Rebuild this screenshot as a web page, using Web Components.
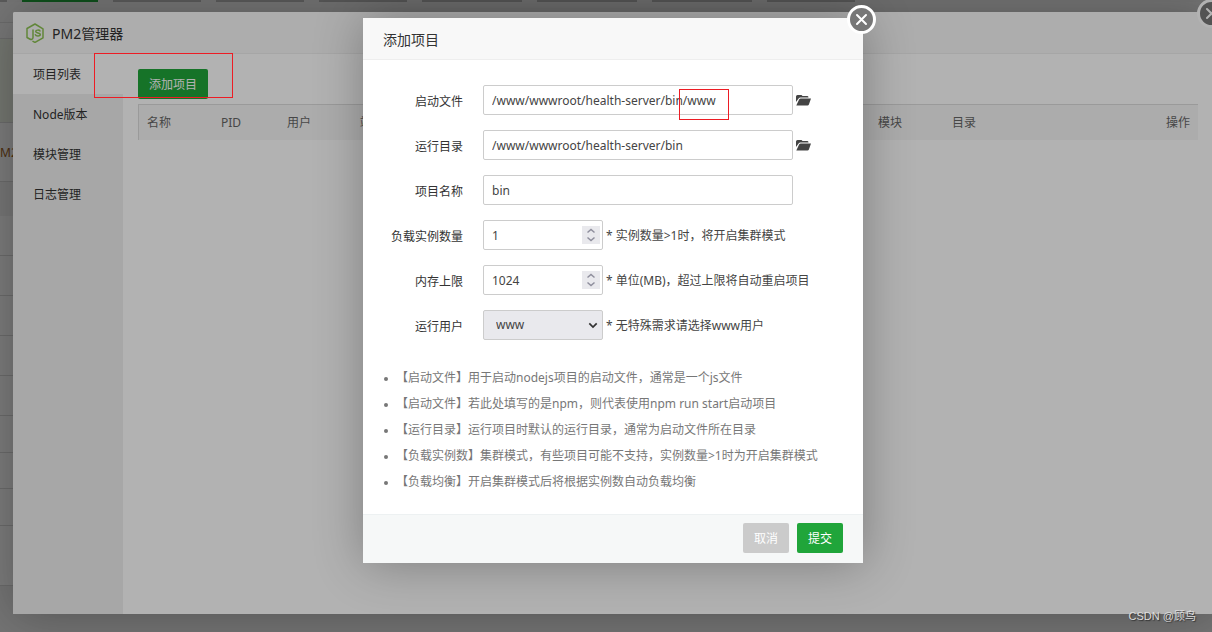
<!DOCTYPE html>
<html lang="zh-CN">
<head>
<meta charset="utf-8">
<title>PM2管理器</title>
<style>
html,body{margin:0;height:100%;overflow:hidden}
body{font:12px/20px "Noto Sans","Noto Sans CJK SC",sans-serif;color:#333;background:#eee}
</style>
</head>
<body>
<layer-stage>
  <panel-backdrop></panel-backdrop>
  <page-mask></page-mask>
  <manager-window heading="PM2管理器">
    <side-tabs slot="side"></side-tabs>
    <project-list></project-list>
  </manager-window>
  <page-mask></page-mask>
  <modal-dialog heading="添加项目">
    <form-row label="启动文件" value="/www/wwwroot/health-server/bin/www" kind="path"></form-row>
    <form-row label="运行目录" value="/www/wwwroot/health-server/bin" kind="path"></form-row>
    <form-row label="项目名称" value="bin" kind="text"></form-row>
    <form-row label="负载实例数量" value="1" kind="number">* 实例数量&gt;1时，将开启集群模式</form-row>
    <form-row label="内存上限" value="1024" kind="number">* 单位(MB)，超过上限将自动重启项目</form-row>
    <form-row label="运行用户" value="www" kind="select">* 无特殊需求请选择www用户</form-row>
    <help-list></help-list>
  </modal-dialog>
  <red-marks></red-marks>
  <water-mark>CSDN @顾鸟</water-mark>
</layer-stage>

<script>
const define = (name, html, setup) => customElements.define(name, class extends HTMLElement {
  constructor() {
    super();
    this.attachShadow({ mode: 'open' });
  }
  connectedCallback() {
    if (this.shadowRoot.childNodes.length) return;
    const t = document.createElement('template');
    t.innerHTML = typeof html === 'function' ? html(this) : html;
    this.shadowRoot.append(t.content.cloneNode(true));
    if (setup) setup(this);
  }
});

define('layer-stage', `
<style>
:host{display:grid;grid-template:minmax(100vh,auto)/minmax(0,1fr);margin-right:-14px;overflow:hidden;position:relative}
::slotted(*){grid-area:1/1}
</style><slot></slot>`);

define('page-mask', `<style>:host{display:block;background:#000;opacity:.3}</style>`);

/* Panel behind both layers: tab buttons along the top, app list on the left. */
define('panel-backdrop', `
<style>
:host{display:block;background:#f0f0f0}
.tabs{display:flex;gap:15px;height:2px;background:#f0f0f0}
.tabs i{width:88px;background:#bbb}
.tabs i.first{width:7px}
.tabs i.on{width:76px;background:#20a53a}
.tabs i.wide{width:100px}
.list{display:flex;flex-direction:column;background:#fff}
.list div{box-sizing:border-box;height:40px;border-bottom:1px solid #ddd;width:100%}
.list .t1{height:21px;background:#f2f2f2}
.list .t2{height:16px;background:#f5f5f5}
.list .note{height:84px;background:#f0f5e9}
.list .name{height:59px;color:#a16222;padding-top:20px}
.list .head{height:34px;background:#f4f4f4;border:0}
.list .s{height:37px}
.list .m{height:36px}
.list .last{height:60px}
</style>
<div class="tabs"><i class="first"></i><i class="on"></i><i></i><i></i><i></i><i class="wide"></i><i class="wide"></i><i class="wide"></i><i></i></div>
<div class="list"><div class="t1"></div><div class="t2"></div><div class="note"></div><div class="name">M2</div><div class="head"></div><div></div><div></div><div></div><div></div><div></div><div class="s"></div><div class="m"></div><div class="s"></div><div class="last"></div></div>`);

define('close-button', `
<style>
:host{display:block;width:29px;height:29px}
button{display:block;width:100%;height:100%;box-sizing:border-box;padding:0;border:3px solid #fff;border-radius:50%;background:#777}
svg{display:block;margin:auto}
</style>
<button aria-label="关闭"><svg width="13" height="13" viewBox="0 0 13 13"><path d="M2 2l9 9M11 2l-9 9" stroke="#fff" stroke-width="2" stroke-linecap="round"/></svg></button>`);

define('manager-window', el => `
<style>
:host{display:flex;flex-direction:column;margin:12px 13px 18px;background:#fff;border-radius:2px;box-shadow:1px 1px 50px rgba(0,0,0,.3);position:relative}
header{display:flex;align-items:center;gap:7px;height:41px;padding-left:12px;border-bottom:1px solid #eee;background:#f8f8f8;font-size:14px;border-radius:2px 2px 0 0}
header span{padding-top:2px}
.body{display:flex;flex:1}
main{flex:1;min-width:0;padding:15px}
close-button{position:absolute;right:-13px;top:-13px}
</style>
<header><svg width="20" height="20" viewBox="0 0 20 20" fill="none" stroke="#8cc152" stroke-width="1.5" stroke-linejoin="round" stroke-linecap="round"><path d="M8 18.400 10 19.400l8-4.500v-9L10 1 2 5.500v9l2.700 1.500c1.500.800 3.300.500 3.300-1.500V7M15 8c-.500-1.200-4.300-1.300-4.300.500 0 2 4.600.900 4.600 3 0 1.900-4.400 1.900-4.900.200"/></svg><span>${el.getAttribute('heading')}</span></header>
<div class="body"><slot name="side"></slot><main><slot></slot></main></div>
<close-button></close-button>`);

define('side-tabs', `
<style>
:host{display:block;width:110px;background:#f0f0f0}
a{display:block;height:40px;line-height:42px;padding-left:20px;color:#333;text-decoration:none}
a.on{background:#fff}
</style>
<nav><a class="on" href="#list">项目列表</a><a href="#node">Node版本</a><a href="#mod">模块管理</a><a href="#log">日志管理</a></nav>`);

define('project-list', `
<style>
:host{display:block}
button{display:block;width:70px;height:30px;border:0;border-radius:2px;background:#20a53a;color:#fff;font:inherit;padding:2px 0 0}
table{width:100%;margin-top:5px;border-collapse:separate;border-spacing:0;table-layout:fixed;border:1px solid #ddd;border-width:1px 0 0 1px;background:#f6f6f6}
th{font-weight:400;text-align:left;color:#666;height:35px;padding:0 8px;box-sizing:border-box}
th:last-child{text-align:right}
</style>
<button>添加项目</button>
<table><colgroup><col style="width:74px"><col style="width:66px"><col style="width:73px"><col style="width:518px"><col style="width:74px"><col></colgroup>
<thead><tr><th>名称</th><th>PID</th><th>用户</th><th>端口</th><th>模块</th><th>目录</th><th>操作</th></tr></thead></table>`);

define('modal-dialog', el => `
<style>
:host{display:block;justify-self:center;align-self:start;width:500px;margin-top:18px;background:#fff;border-radius:2px;box-shadow:1px 1px 50px rgba(0,0,0,.3);position:relative}
header{height:41px;line-height:43px;padding-left:20px;border-bottom:1px solid #eee;background:#f8f8f8;font-size:14px}
form{display:flex;flex-direction:column;gap:15px;padding:25px 20px 19px 0}
footer{display:flex;justify-content:flex-end;gap:8px;padding:8px 20px 10px;border-top:1px solid #edf1f2;background:#f6f8f8}
button{width:46px;height:30px;border:0;border-radius:2px;background:#cbcbcb;color:#fff;font:inherit;padding:2px 0 0}
.ok{background:#20a53a}
close-button{position:absolute;right:-13px;top:-13px}
</style>
<header>${el.getAttribute('heading')}</header>
<form><slot></slot></form>
<footer><button>取消</button><button class="ok">提交</button></footer>
<close-button></close-button>`);

const folder = `<svg class="folder" width="16" height="12" viewBox="0 0 16 12" fill="#444"><path d="M0 8V2.500Q0 1 1.500 1H5.500l1 1h5q1 0 1 1.500H4.300Q3.300 3.500 2.800 4.300zM4.700 4.500H15L12.900 10.500Q12.500 11.500 11.500 11.500H.300L3.200 5.200Q3.700 4.500 4.700 4.500z"/></svg>`;
const stepper = `<svg class="step" width="18" height="18" viewBox="0 0 18 18"><path fill="#e9e9ed" d="M0 0h18v18H0z"/><path d="M5.500 6.500 9 3.500l3.500 3M5.500 11.500 9 14.500l3.500-3" fill="none" stroke="#8f8f9d" stroke-width="1.500"/></svg>`;
const chevron = `<svg class="chev" width="10" height="7" viewBox="0 0 10 7"><path d="M1.300 1.300 5 5l3.700-3.700" fill="none" stroke="#333" stroke-width="1.700"/></svg>`;

define('form-row', el => {
  const kind = el.getAttribute('kind'), value = el.getAttribute('value');
  const control = kind === 'select'
    ? `<select id="f"><option>${value}</option></select>${chevron}`
    : `<input id="f" type="${kind === 'number' ? 'number' : 'text'}" value="${value}">${kind === 'number' ? stepper : ''}`;
  return `
<style>
:host{display:flex;align-items:center;height:30px}
label{width:100px;margin-right:20px;text-align:right;padding-top:4px}
.box{position:relative;width:${kind === 'number' || kind === 'select' ? 120 : 310}px;height:30px;margin-right:3px}
input,select{display:block;box-sizing:border-box;width:100%;height:30px;margin:0;padding:0 8px;border:1px solid #ccc;border-radius:2px;background:#fff;color:#444;font:inherit;outline:0}
input{padding-top:1px}
input[type=number]{appearance:textfield}
input::-webkit-inner-spin-button{display:none}
select{appearance:none;background:#e9e9ed;padding-left:12px}
.step{position:absolute;right:3px;top:6px}
.chev{position:absolute;right:5px;top:12px}
.hint{padding-top:2px;color:#444}
</style>
<label for="f">${el.getAttribute('label')}</label><div class="box">${control}</div>${kind === 'path' ? folder : '<span class="hint"><slot></slot></span>'}`;
});

define('help-list', `
<style>
:host{display:block;padding-top:10px}
ul{margin:0;padding:0 0 0 21px;line-height:26px;color:#777;list-style:none}
li{display:flex;align-items:center;gap:8px}
li::before{content:"";width:4px;height:4px;margin-top:2px;border-radius:50%;background:#777}
</style>
<ul><li>【启动文件】用于启动nodejs项目的启动文件，通常是一个js文件</li><li>【启动文件】若此处填写的是npm，则代表使用npm run start启动项目</li><li>【运行目录】运行项目时默认的运行目录，通常为启动文件所在目录</li><li>【负载实例数】集群模式，有些项目可能不支持，实例数量&gt;1时为开启集群模式</li><li>【负载均衡】开启集群模式后将根据实例数自动负载均衡</li></ul>`);

/* Hand-drawn style highlights laid over the screen. */
define('red-marks', `
<style>
:host{display:block;position:relative;pointer-events:none}
i{position:absolute;box-sizing:border-box;border:1px solid #ed1c24}
.a{left:94px;top:53px;width:139px;height:45px}
.b{left:calc(50% + 66px);top:89px;width:50px;height:31px}
</style><i class="a"></i><i class="b"></i>`);

define('water-mark', `
<style>
:host{display:block;align-self:end;justify-self:end;margin:0 30px 6px 0;font:11px/20px "Liberation Sans","Noto Sans CJK SC",sans-serif;color:#ddd;text-shadow:1px 1px 1px #333;position:relative}
</style><slot></slot>`);
</script>
</body>
</html>
